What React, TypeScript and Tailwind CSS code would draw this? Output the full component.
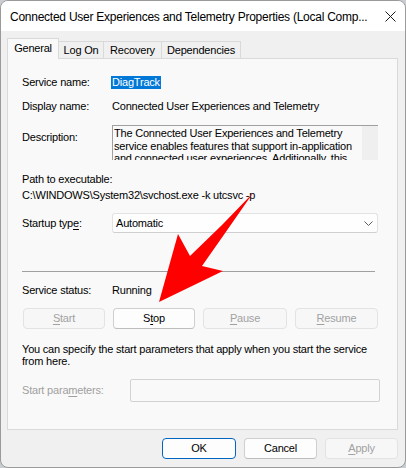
import React from "react";

const font = { fontFamily: '"Liberation Sans", Arial, sans-serif' };

function Btn({
  children,
  w,
  disabled,
  primary,
}: {
  children: React.ReactNode;
  w: string;
  disabled?: boolean;
  primary?: boolean;
}) {
  const base = "h-[21px] rounded-[4px] border flex items-center justify-center leading-none";
  const cls = disabled
    ? "border-[#e3e3e3] bg-[#f7f7f7] text-[#a2a2a2]"
    : primary
    ? "border-[#0067c0] bg-[#fdfdfd] text-black"
    : "border-[#cfcfcf] border-b-[#bdbdbd] bg-[#fdfdfd] text-black";
  return <div className={`${base} ${cls} ${w}`}>{children}</div>;
}

export default function App() {
  return (
    <div className="relative w-[406px] h-[468px] bg-[#c9cdd2] text-[11px] tracking-[-0.2px] text-black" style={font}>
      <div className="w-[406px] h-[468px] rounded-[8px] border border-[#9a9a9a] bg-[#f0f0f0] overflow-hidden flex flex-col">
        {/* title bar */}
        <div className="h-[30px] bg-white flex items-center justify-between pl-[9px] pr-[9px] shrink-0">
          <span className="text-[12px] tracking-[-0.25px] leading-none pt-[1px] whitespace-nowrap">
            Connected User Experiences and Telemetry Properties (Local Comp...
          </span>
          <svg width="11" height="11" viewBox="0 0 11 11" className="mt-[1px]">
            <path d="M0.5 0.5 L10.5 10.5 M10.5 0.5 L0.5 10.5" stroke="#1b1b1b" strokeWidth="1" fill="none" />
          </svg>
        </div>

        {/* body */}
        <div className="flex flex-col pl-[6px] pr-[7px] pt-[7px]">
          {/* tabs */}
          <div className="flex items-end h-[20px] relative z-10">
            <div className="h-[21px] -mb-px w-[52px] bg-[#f9f9f9] border border-[#d9d9d9] border-b-0 flex items-center justify-center pb-[2px]">
              General
            </div>
            <div className="h-[17px] w-[45px] bg-[#f0f0f0] border border-l-0 border-b-0 border-[#d9d9d9] flex items-center justify-center">
              Log On
            </div>
            <div className="h-[17px] w-[58px] bg-[#f0f0f0] border border-l-0 border-b-0 border-[#d9d9d9] flex items-center justify-center">
              Recovery
            </div>
            <div className="h-[17px] w-[79px] bg-[#f0f0f0] border border-l-0 border-b-0 border-[#d9d9d9] flex items-center justify-center">
              Dependencies
            </div>
          </div>

          {/* panel */}
          <div className="h-[372px] bg-[#f9f9f9] border border-[#d9d9d9] flex flex-col pl-[14px]">
            <div className="mt-[15px] h-[16px] flex items-center">
              <div className="w-[90px]">Service name:</div>
              <span className="bg-[#0078d7] text-white leading-[13px] h-[13px] px-[1px] -ml-[1px]">DiagTrack</span>
            </div>
            <div className="mt-[8px] h-[16px] flex items-center">
              <div className="w-[90px]">Display name:</div>
              <div>Connected User Experiences and Telemetry</div>
            </div>
            <div className="mt-[11px] flex">
              <div className="w-[90px] pt-[4px] leading-[16px]">Description:</div>
              <div className="w-[266px] h-[35px] border-t border-l border-[#a0a0a0] flex overflow-hidden">
                <div className="flex-1 pl-[1px] pt-[1px] leading-[12.5px] overflow-hidden whitespace-nowrap">
                  The Connected User Experiences and Telemetry
                  <br />
                  service enables features that support in-application
                  <br />
                  and connected user experiences. Additionally, this
                </div>
                <div className="w-[16px] h-full bg-[#efefef]" />
              </div>
            </div>
            <div className="mt-[11px] h-[16px] leading-[16px]">Path to executable:</div>
            <div className="h-[16px] leading-[16px]">C:\WINDOWS\System32\svchost.exe -k utcsvc -p</div>
            <div className="mt-[10px] flex items-center h-[20px]">
              <div className="w-[90px]">
                Startup typ<u className="underline-offset-2">e</u>:
              </div>
              <div className="w-[266px] h-[20px] rounded-[3px] border border-[#e2e2e2] border-b-[#cfcfcf] bg-[#fefefe] flex items-center justify-between pl-[3px] pr-[4px]">
                <span>Automatic</span>
                <svg width="9" height="5" viewBox="0 0 9 5">
                  <path d="M0.5 0.5 L4.5 4.5 L8.5 0.5" stroke="#5d5d5d" strokeWidth="1" fill="none" />
                </svg>
              </div>
            </div>
            <div className="mt-[38px] h-px w-[353px] bg-[#a0a0a0]" />
            <div className="mt-[10px] h-[16px] flex items-center">
              <div className="w-[90px]">Service status:</div>
              <div>Running</div>
            </div>
            <div className="mt-[10px] flex gap-[8px] ml-[1px]">
              <Btn w="w-[82px]" disabled>
                <u className="underline-offset-2">S</u>tart
              </Btn>
              <Btn w="w-[82px]">
                S<u className="underline-offset-2">t</u>op
              </Btn>
              <Btn w="w-[84px]" disabled>
                <u className="underline-offset-2">P</u>ause
              </Btn>
              <Btn w="w-[83px]" disabled>
                <u className="underline-offset-2">R</u>esume
              </Btn>
            </div>
            <div className="mt-[14px] leading-[12px]">
              You can specify the start parameters that apply when you start the service
              <br />
              from here.
            </div>
            <div className="mt-[12px] flex items-center">
              <div className="w-[108px] text-[#a0a0a0]">
                Start para<u className="underline-offset-2">m</u>eters:
              </div>
              <div className="w-[250px] h-[23px] rounded-[2px] border border-[#d2d2d2] bg-[#f9f9f9]" />
            </div>
          </div>

          {/* dialog buttons */}
          <div className="mt-[8px] flex justify-end gap-[8px]">
            <Btn w="w-[74px]" primary>
              OK
            </Btn>
            <Btn w="w-[73px]">Cancel</Btn>
            <Btn w="w-[73px]" disabled>
              <u className="underline-offset-2">A</u>pply
            </Btn>
          </div>
        </div>
      </div>

      {/* red annotation arrow */}
      <svg className="absolute left-0 top-0 pointer-events-none" width="406" height="468" viewBox="0 0 406 468">
        <path
          d="M253 193 Q 222 226 190 256 L178 234 L159 302 L223 271 L202 266 Q 228 229 253 193 Z"
          fill="#fe0000"
        />
      </svg>
    </div>
  );
}
